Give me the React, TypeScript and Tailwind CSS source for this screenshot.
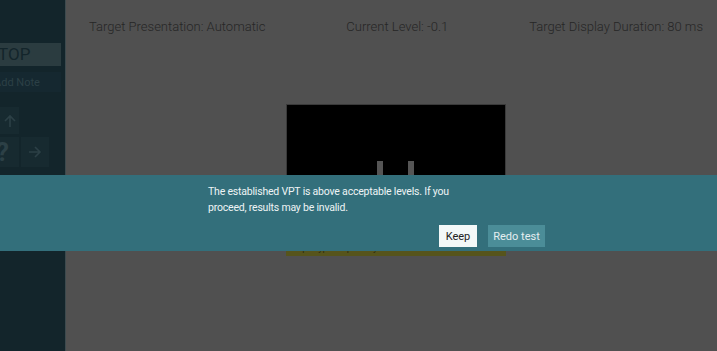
import React from "react";

export default function App() {
  const font = { fontFamily: 'Roboto, "Noto Sans", sans-serif' };
  return (
    <div className="relative w-[717px] h-[351px] overflow-hidden flex bg-[#505050]" style={font}>
      {/* Sidebar */}
      <div className="w-[66px] h-full bg-[#13252b] border-r border-[#3c4a4e] overflow-hidden flex flex-col shrink-0">
        <div className="mt-[43px] w-[61px] h-[23px] bg-[#2b3c40] flex items-center overflow-hidden">
          <span className="ml-[-12px] text-[17px] leading-none text-[#13252b] whitespace-nowrap">STOP</span>
        </div>
        <div className="mt-[6px] w-[61px] h-[20px] bg-[#152830] flex items-center overflow-hidden">
          <span className="ml-[-6px] text-[11px] leading-none text-[#2c4046] whitespace-nowrap">Add Note</span>
        </div>
        <div className="mt-[15px] w-[19px] h-[27px] bg-[#172a30] flex items-center justify-center">
          <svg width="14" height="14" viewBox="0 0 14 14" fill="none" stroke="#2c4046" strokeWidth="1.6">
            <path d="M2 7 L7 2 L12 7 M7 2 V13" />
          </svg>
        </div>
        <div className="mt-[3px] flex gap-[2px]">
          <div className="w-[19px] h-[30px] bg-[#172a30] flex items-center overflow-hidden">
            <span className="ml-[-4px] text-[26px] leading-none font-bold text-[#2c4046]">?</span>
          </div>
          <div className="w-[28px] h-[30px] bg-[#172a30] flex items-center justify-center">
            <svg width="14" height="14" viewBox="0 0 14 14" fill="none" stroke="#2c4046" strokeWidth="1.6">
              <path d="M7 2 L12 7 L7 12 M1 7 H12" />
            </svg>
          </div>
        </div>
      </div>

      {/* Main */}
      <div className="flex-1 flex flex-col">
        <div className="h-[54px] flex items-center justify-between pl-[23px] pr-[14px] text-[13px] text-[#262626] font-light whitespace-nowrap">
          <span>Target Presentation: Automatic</span>
          <span>Current Level: -0.1</span>
          <span>Target Display Duration: 80 ms</span>
        </div>
        <div className="mt-[50px] ml-[220px] w-[220px] flex flex-col">
          <div className="h-[136px] bg-black border border-[#3a3a3a] relative flex justify-center gap-[25px] items-end">
            <div className="w-[6px] h-[78px] bg-[#555] ml-[-2px]" />
            <div className="w-[6px] h-[78px] bg-[#555]" />
          </div>
          <div className="h-[16px] bg-[#56541c] text-[9px] leading-[16px] text-[#2a2a10] px-[10px] whitespace-nowrap overflow-hidden">
            Optotype on primary monitor not to scale. Use secondary monitor.
          </div>
        </div>
      </div>

      {/* Modal banner */}
      <div className="absolute left-0 top-[175px] w-full h-[76px] bg-[#336f7b] flex flex-col">
        <div className="pl-[208px] pt-[9px] text-[10.5px] tracking-[-0.2px] leading-[16px] text-[#eef4f5] whitespace-nowrap">
          The established VPT is above acceptable levels. If you
          <br />
          proceed, results may be invalid.
        </div>
        <div className="mt-auto mb-[4px] pl-[439px] flex gap-[11px]">
          <button className="w-[38px] h-[22px] bg-[#f3f8f8] text-[#222] text-[11px] leading-none flex items-center justify-center">
            Keep
          </button>
          <button className="w-[57px] h-[22px] bg-[#4b8d98] text-[#e4eef0] text-[11px] leading-none flex items-center justify-center">
            Redo test
          </button>
        </div>
      </div>
    </div>
  );
}
